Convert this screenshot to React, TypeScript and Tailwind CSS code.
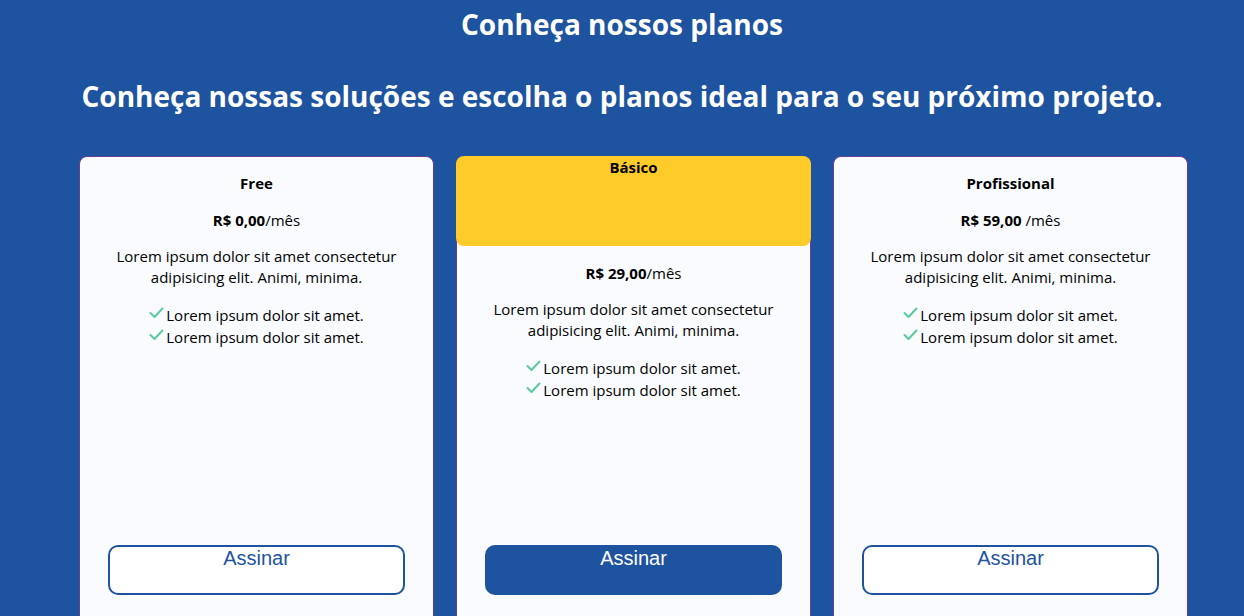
import React from "react";

type Plan = {
  name: string;
  price: string;
  suffix: string;
  featured?: boolean;
};

const plans: Plan[] = [
  { name: "Free", price: "R$ 0,00", suffix: "/mês" },
  { name: "Básico", price: "R$ 29,00", suffix: "/mês", featured: true },
  { name: "Profissional", price: "R$ 59,00", suffix: " /mês" },
];

function Check() {
  return (
    <svg width="15" height="12" viewBox="0 0 15 12" className="inline-block mr-[2px] -translate-y-[4px]">
      <polyline points="1.5,6 5.5,10 13.5,1.5" fill="none" stroke="#5cc9a0" strokeWidth="2" strokeLinecap="round" strokeLinejoin="round" />
    </svg>
  );
}

function Card({ plan }: { plan: Plan }) {
  return (
    <div className="w-[355px] h-[470px] flex flex-col bg-[#f9fbfe] border border-[#6a3c9e] rounded-t-[8px] text-center text-black text-[15px]">
      {plan.featured ? (
        <div className="h-[90px] -mx-px -mt-px bg-[#ffcb2a] rounded-[8px] pt-[1px]">
          <h3 className="font-bold leading-[20px]">{plan.name}</h3>
        </div>
      ) : (
        <h3 className="font-bold leading-[20px] mt-[16px]">{plan.name}</h3>
      )}
      <p className={`leading-[20px] ${plan.featured ? "mt-[17px]" : "mt-[17px]"}`}>
        <span className="font-bold">{plan.price}</span>
        {plan.suffix}
      </p>
      <p className="mt-[16px] leading-[21px] px-[29px]">
        Lorem ipsum dolor sit amet consectetur adipisicing elit. Animi, minima.
      </p>
      <ul className="mt-[16px] leading-[22px]">
        <li>
          <Check />
          Lorem ipsum dolor sit amet.
        </li>
        <li>
          <Check />
          Lorem ipsum dolor sit amet.
        </li>
      </ul>
      <div className="mt-auto px-[28px] pb-[30px]">
        <button
          className={`w-full h-[50px] flex justify-center items-start rounded-[10px] border-2 border-[#1e53a0] text-[20px] leading-[23px] font-['Liberation_Sans',Arial,sans-serif] ${
            plan.featured ? "bg-[#1e53a0] text-white" : "bg-white text-[#1e53a0]"
          }`}
        >
          Assinar
        </button>
      </div>
    </div>
  );
}

export default function App() {
  return (
    <div className="w-[1244px] h-[616px] overflow-hidden bg-[#1e53a0] font-['Open_Sans',sans-serif]">
      <h1 className="text-white font-bold text-[28px] leading-[36px] text-center pt-[6px]">Conheça nossos planos</h1>
      <h2 className="text-white font-bold text-[28px] leading-[36px] text-center mt-[36px]">
        Conheça nossas soluções e escolha o planos ideal para o seu próximo projeto.
      </h2>
      <div className="flex gap-[22px] mt-[42px] pl-[79px]">
        {plans.map((p) => (
          <Card key={p.name} plan={p} />
        ))}
      </div>
    </div>
  );
}
